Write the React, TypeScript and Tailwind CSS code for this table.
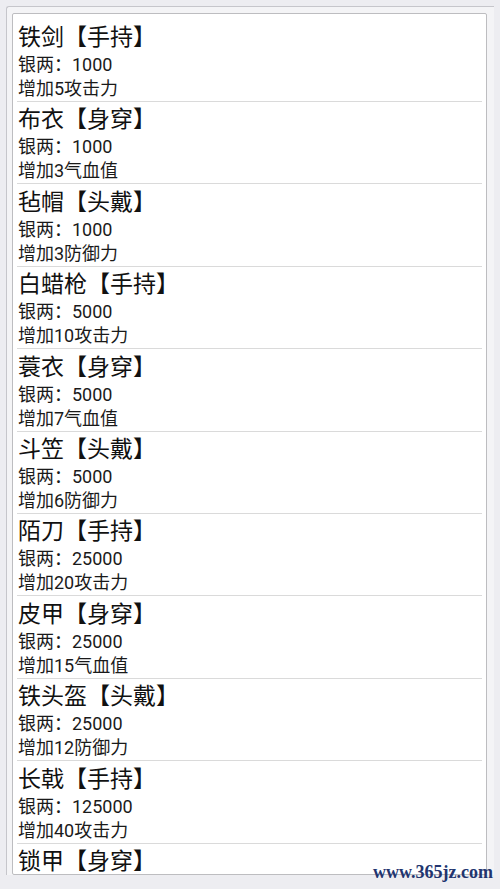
import React from "react"

type Item = { name: string; slot: string; price?: number; effect?: string }

const items: Item[] = [
  { name: "铁剑", slot: "手持", price: 1000, effect: "增加5攻击力" },
  { name: "布衣", slot: "身穿", price: 1000, effect: "增加3气血值" },
  { name: "毡帽", slot: "头戴", price: 1000, effect: "增加3防御力" },
  { name: "白蜡枪", slot: "手持", price: 5000, effect: "增加10攻击力" },
  { name: "蓑衣", slot: "身穿", price: 5000, effect: "增加7气血值" },
  { name: "斗笠", slot: "头戴", price: 5000, effect: "增加6防御力" },
  { name: "陌刀", slot: "手持", price: 25000, effect: "增加20攻击力" },
  { name: "皮甲", slot: "身穿", price: 25000, effect: "增加15气血值" },
  { name: "铁头盔", slot: "头戴", price: 25000, effect: "增加12防御力" },
  { name: "长戟", slot: "手持", price: 125000, effect: "增加40攻击力" },
  // last one is cut by the bottom of the list, only its title shows
  { name: "锁甲", slot: "身穿" },
]

function ItemRow({ item, first }: { item: Item; first: boolean }) {
  return (
    <div
      className={
        first
          ? "mx-[4px] flex flex-col border-b border-[#dadada] pt-[9px] pl-[1px]"
          : "mx-[4px] box-border flex h-[82.4px] shrink-0 flex-col border-b border-[#dadada] pt-[3.4px] pl-[1px]"
      }
    >
      <div className="h-[30px] text-[23px] leading-[30px] text-[#111111]">
        {item.name}【{item.slot}】
      </div>
      {item.price !== undefined && (
        <div className="h-[24px] text-[18px] leading-[24px] text-[#1a1a1a]">银两：{item.price}</div>
      )}
      {item.effect && <div className="h-[24px] text-[18px] leading-[24px] text-[#1a1a1a]">{item.effect}</div>}
    </div>
  )
}

export default function App() {
  return (
    <div
      className="relative h-[889px] w-[500px] overflow-hidden bg-[#ededf1] pt-[6px] pl-[6px]"
      style={{ fontFamily: 'Roboto, "Noto Sans CJK SC", sans-serif' }}
    >
      {/* back sheet, only its top and left edges show */}
      <div className="w-[488px] rounded-tl-[3px] border-t border-l border-[#c6c6cb] bg-[#f4f4f6] pt-[6px] pr-[7px] pl-[5px]">
        <div className="-mb-[7px] flex h-[862px] flex-col overflow-hidden rounded-[2px] border border-[#bdbdc0] bg-white">
          {items.map((item, i) => (
            <ItemRow key={i} item={item} first={i === 0} />
          ))}
        </div>
      </div>

      {/* watermark */}
      <div
        className="absolute right-[7px] bottom-[7px] text-[18px] font-bold leading-[20px] text-[#22356f]"
        style={{ fontFamily: '"Liberation Serif", serif' }}
      >
        www.365jz.com
      </div>
    </div>
  )
}
